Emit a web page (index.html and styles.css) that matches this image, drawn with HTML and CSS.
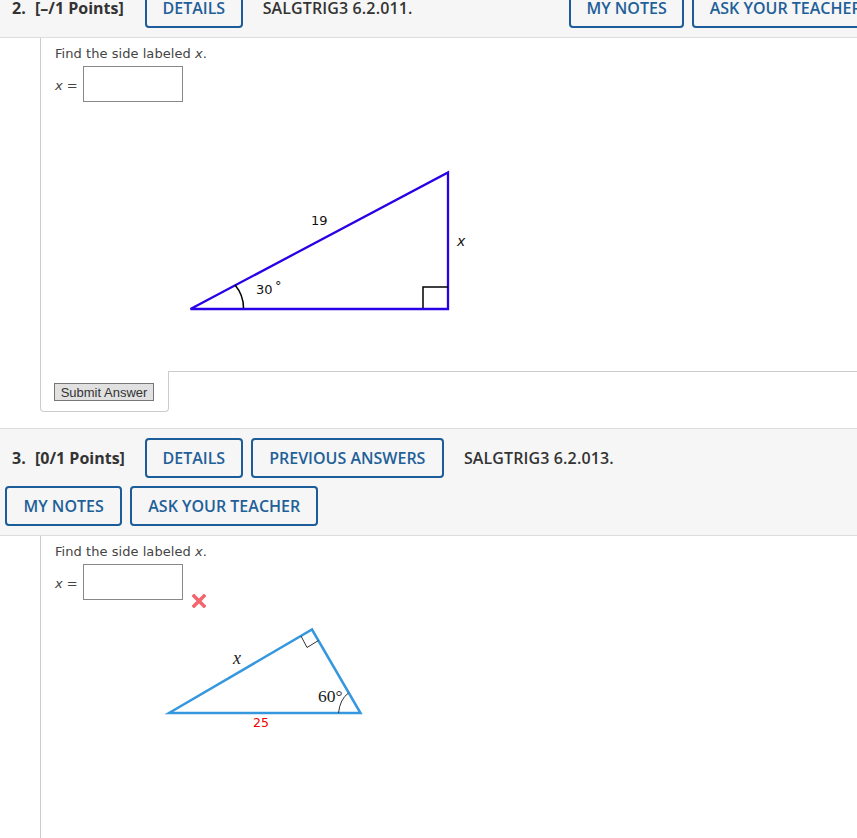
FILE: index.html
```html
<!DOCTYPE html>
<html lang="en">
<head>
<meta charset="utf-8">
<title>SALGTRIG3</title>
<link rel="stylesheet" href="styles.css">
</head>
<body>
<main class="page">
  <section class="question">
    <header class="qhead qhead-first">
      <span class="num">2.</span>
      <span class="points">[–/1 Points]</span>
      <a class="btn btn-details">DETAILS</a>
      <span class="code">SALGTRIG3 6.2.011.</span>
      <a class="btn btn-notes">MY NOTES</a>
      <a class="btn btn-ask">ASK YOUR TEACHER</a>
    </header>
    <div class="qbody">
      <div class="qcontent qcontent-first">
        <p class="prompt">Find the side labeled <i>x</i>.</p>
        <div class="answer">
          <span class="var"><i>x</i> =</span>
          <span class="field"></span>
        </div>
        <svg class="fig fig-one" width="300" height="160" viewBox="180 160 300 160">
          <path class="tri-a" d="M190.500 309 L448 172.500 V309 Z"/>
          <path class="mark-a" d="M423 308 V287 H448"/>
          <path class="mark-a" d="M235 285 Q243.500 295 243.500 308"/>
          <text class="lbl-a" x="311" y="224.500">19</text>
          <text class="lbl-a" x="256" y="294">30</text>
          <text class="lbl-a" x="275" y="290">°</text>
          <text class="lbl-a lbl-i" x="457" y="246">x</text>
        </svg>
      </div>
      <div class="foot">
        <div class="foot-cell"><button class="submit" type="button">Submit Answer</button></div>
        <div class="foot-rest"></div>
      </div>
    </div>
  </section>
  <section class="question">
    <header class="qhead qhead-second">
      <div class="hrow">
        <span class="num">3.</span>
        <span class="points">[0/1 Points]</span>
        <a class="btn btn-details">DETAILS</a>
        <a class="btn btn-prev">PREVIOUS ANSWERS</a>
        <span class="code code-two">SALGTRIG3 6.2.013.</span>
      </div>
      <div class="hrow hrow-two">
        <a class="btn btn-notes-two">MY NOTES</a>
        <a class="btn">ASK YOUR TEACHER</a>
      </div>
    </header>
    <div class="qbody">
      <div class="qcontent qcontent-last">
        <p class="prompt">Find the side labeled <i>x</i>.</p>
        <div class="answer">
          <span class="var"><i>x</i> =</span>
          <span class="field"></span>
          <svg class="wrong" width="14" height="14" viewBox="0 0 14 14">
            <path d="M2 2 L12 12 M12 2 L2 12"/>
          </svg>
        </div>
        <svg class="fig fig-two" width="230" height="130" viewBox="150 610 230 130">
          <path class="tri-b" d="M169 713 L312 629.500 L360.500 713 Z"/>
          <path class="mark-b" d="M301 636 L307 647.500 L318.500 640.500"/>
          <path class="mark-b" d="M338.500 713 Q340 699 348.500 693"/>
          <text class="lbl-b lbl-x" x="233" y="664">x</text>
          <text class="lbl-b lbl-deg" x="318" y="702">60°</text>
          <text class="lbl-red" x="253" y="727">25</text>
        </svg>
      </div>
    </div>
  </section>
</main>
</body>
</html>
```
FILE: styles.css
```css
html, body {
  margin: 0;
  padding: 0;
  height: 100%;
  overflow: hidden;
  background: #fff;
}
.page {
  margin-top: -22px;
  font-family: "DejaVu Sans", Verdana, sans-serif;
  color: #444;
}
.qhead {
  background: #f6f6f6;
  border-top: 1px solid #ddd;
  border-bottom: 1px solid #ddd;
  font-family: "Open Sans", sans-serif;
  font-size: 16px;
  font-weight: 600;
  color: #333;
  white-space: nowrap;
}
.qhead-first {
  display: flex;
  align-items: center;
  height: 58px;
  padding-left: 12px;
}
.qhead-second {
  height: 106px;
  margin-top: 16px;
}
.hrow {
  display: flex;
  align-items: center;
  padding: 9px 0 0 12px;
  gap: 8px;
}
.hrow-two {
  padding: 8px 0 0 5px;
}
.num {
  font-weight: 700;
  width: 23px;
  flex: none;
}
.points {
  font-weight: 700;
  width: 110px;
  flex: none;
}
.hrow .num { margin-right: -8px; }
.hrow .points { margin-right: -8px; }
.code {
  margin-left: 20px;
  font-weight: 600;
  letter-spacing: 0.12px;
}
.code-two { margin-left: 12px; }
.btn {
  box-sizing: border-box;
  display: flex;
  align-items: center;
  height: 40px;
  padding: 0 16px;
  border: 2px solid #1c5d99;
  border-radius: 4px;
  color: #1f6099;
  flex: none;
}
.btn-details { padding: 0 15.500px; }
.btn-prev { padding: 0 16.500px; }
.btn-notes {
  margin-left: 157px;
  padding: 0 15px;
}
.btn-notes-two { padding: 0 16.500px; }
.btn-ask { margin-left: 8px; }
.qbody {
  margin-left: 40px;
}
.qcontent {
  border-left: 1px solid #ccc;
  padding-top: 8px;
}
.qcontent-first { padding-bottom: 51px; }
.qcontent-last { height: 400px; }
.prompt {
  margin: 0 0 4px 14px;
  font-size: 13px;
  line-height: 16px;
  letter-spacing: 0.05px;
}
.answer {
  display: flex;
  align-items: flex-end;
  margin-left: 14px;
}
.var {
  align-self: center;
  width: 28px;
  padding-top: 2px;
  font-size: 13px;
}
.field {
  box-sizing: border-box;
  display: block;
  width: 100px;
  height: 36px;
  background: #fff;
  border: 1px solid #888;
}
.wrong {
  margin: 0 0 -8px 9px;
}
.wrong path {
  fill: none;
  stroke: #f4666e;
  stroke-width: 3.500;
  stroke-linecap: square;
}
.fig {
  display: block;
}
.fig-one {
  margin: 58px 0 0 139px;
}
.fig-two {
  margin: 10px 0 0 109px;
}
.tri-a {
  fill: none;
  stroke: #2a00e6;
  stroke-width: 2.300;
}
.mark-a {
  fill: none;
  stroke: #000;
  stroke-width: 1.500;
}
.lbl-a {
  font-family: "DejaVu Sans", sans-serif;
  font-size: 13px;
  fill: #111;
}
.lbl-i {
  font-style: italic;
  font-size: 14px;
}
.tri-b {
  fill: none;
  stroke: #3597dd;
  stroke-width: 2.500;
}
.mark-b {
  fill: none;
  stroke: #333;
  stroke-width: 1;
}
.lbl-b {
  font-family: "Liberation Serif", serif;
  fill: #222;
}
.lbl-x {
  font-size: 18px;
  font-style: italic;
}
.lbl-deg {
  font-size: 17.500px;
}
.lbl-red {
  font-family: "DejaVu Sans", sans-serif;
  font-size: 12.500px;
  fill: #f00000;
}
.foot {
  display: flex;
}
.foot-cell {
  box-sizing: border-box;
  width: 129px;
  height: 41px;
  padding: 12px 0 0 13px;
  border-left: 1px solid #ccc;
  border-right: 1px solid #ccc;
  border-bottom: 1px solid #ccc;
  border-bottom-left-radius: 4px;
  border-bottom-right-radius: 4px;
}
.foot-rest {
  flex: 1;
  border-top: 1px solid #ccc;
}
.submit {
  display: block;
  box-sizing: border-box;
  width: 100px;
  height: 18px;
  padding: 0;
  font-family: "Liberation Sans", Arial, sans-serif;
  font-size: 13px;
  color: #333;
  background: #e1e1e1;
  border: 1px solid #777;
}
```
